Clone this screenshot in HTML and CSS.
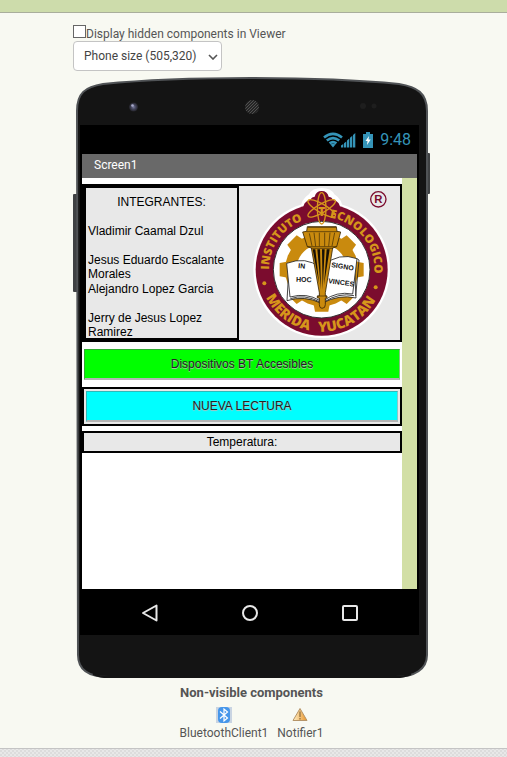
FILE: index.html
```html
<!DOCTYPE html>
<html lang="es">
<head>
<meta charset="utf-8">
<meta name="viewport" content="width=device-width, initial-scale=1">
<title>Viewer</title>
<link rel="stylesheet" href="styles.css">
</head>
<body>
<header class="viewer-header"></header>
<main class="viewer">
  <div class="options">
    <label class="hidden-toggle"><input type="checkbox" class="hidden-check">Display hidden components in Viewer</label>
    <div class="size-picker">
      <select class="size-select" aria-label="Screen size"><option>Phone size (505,320)</option></select>
      <svg class="size-chevron" width="10" height="6" viewBox="0 0 10 6" aria-hidden="true"><path d="M1 1L5 5L9 1" fill="none" stroke="#555" stroke-width="1.6"/></svg>
    </div>
  </div>

  <div class="phone">
    <svg class="phone-shell" viewBox="0 0 357 601" preserveAspectRatio="none" aria-hidden="true">
      <defs>
        <radialGradient id="lens"><stop offset="0" stop-color="#777a9c"/><stop offset=".5" stop-color="#44455c"/><stop offset="1" stop-color="#222228"/></radialGradient>
        <pattern id="mesh" width="3" height="3" patternUnits="userSpaceOnUse"><rect width="3" height="3" fill="#252525"/><path d="M0 3L3 0" stroke="#5c5c5c" stroke-width=".8"/></pattern>
      </defs>
      <rect x="0" y="117" width="5" height="98" rx="1" fill="#3f4143"/>
      <rect x="352" y="76" width="5" height="41" rx="1" fill="#3f4143"/>
      <path d="M4 34C4 16 12 10 30 7C80 2 130 1 178 1S276 2 326 7C344 10 354 16 354 34V578C354 592 342 600 322 600H36C15 600 5 592 5 578Z" fill="#141414" stroke="#505356" stroke-width="2"/>
      <path d="M20 597Q26 600 36 600H322Q332 600 338 597" fill="none" stroke="#141414" stroke-width="2"/>
      <circle cx="60.500" cy="30" r="4.500" fill="url(#lens)"/>
      <circle cx="59.500" cy="28.500" r="1.300" fill="#a9abcc"/>
      <circle cx="179" cy="30" r="7" fill="url(#mesh)"/>
      <circle cx="290" cy="29" r="3" fill="#1e1e1e"/>
      <circle cx="301" cy="29" r="2.500" fill="#1e1e1e"/>
    </svg>

    <div class="display">
      <div class="status-bar">
        <svg width="33" height="16" viewBox="0 0 33 16" aria-label="Network">
          <g fill="none" stroke="#3594b8" stroke-width="2.600"><path d="M1 5.600Q10 -2 19 5.600"/><path d="M3.800 8.600Q10 3.500 16.200 8.600"/><path d="M6.600 11.400Q10 8.800 13.400 11.400"/></g>
          <path d="M7.500 12.600Q10 11 12.500 12.600L10 15.500Z" fill="#3594b8"/>
          <path d="M18 15.500V13.500L20.300 12V15.500ZM21 15.500V11.300L23.300 9.500V15.500ZM24 15.500V8.500L26.300 6.600V15.500ZM27 15.500V5.700L29.300 3.800V15.500ZM30 15.500V3L32.300 1V15.500Z" fill="#3594b8"/>
        </svg>
        <svg width="10" height="16" viewBox="0 0 10 16" aria-label="Battery"><path d="M3 0H7V2H10V16H0V2H3Z" fill="#3594b8"/><path d="M6 4L2.500 9H4.500L4 13L7.700 7.600H5.500Z" fill="#fff"/></svg>
        <span class="clock">9:48</span>
      </div>
      <div class="app">
        <div class="title-bar">Screen1</div>
        <div class="app-body">
          <div class="components">
            <div class="frame team">
              <div class="frame names">
                <p class="names-title">INTEGRANTES:</p>
                <p>Vladimir Caamal Dzul</p>
                <div class="names-pair">
                  <p>Jesus Eduardo Escalante Morales</p>
                  <p>Alejandro Lopez Garcia</p>
                </div>
                <p>Jerry de Jesus Lopez Ramirez</p>
              </div>
              <svg class="seal" viewBox="-3 18 480 462" role="img" aria-label="Instituto Tecnologico Merida Yucatan">
                <defs>
                  <path id="arcTop" d="M87 269A158 158 0 0 1 403 269A158 158 0 0 1 380 350"/>
                  <path id="arcBottom" d="M59 269A186 186 0 0 0 431 269"/>
                </defs>
                <path d="M190 84Q186 64 212 46Q220 30 245 30Q270 30 278 46Q304 64 300 84Z" fill="#fff" stroke="#fff" stroke-width="12"/>
                <circle cx="245" cy="269" r="205" fill="#fff"/>
                <circle cx="245" cy="269" r="198" fill="#7b0c2e"/>
                <path d="M190 88Q188 66 210 60Q216 50 224 50Q228 33 245 33Q262 33 266 50Q274 50 280 60Q302 66 300 88L306 104H184Z" fill="#7b0c2e"/>
                <circle cx="245" cy="269" r="145" fill="#fff" stroke="#333" stroke-width="3"/>
                <g fill="#c98a0e">
                  <path id="tooth" d="M219 176L225 143H265L271 176Z"/>
                  <use href="#tooth" transform="rotate(45 245 269)"/>
                  <use href="#tooth" transform="rotate(90 245 269)"/>
                  <use href="#tooth" transform="rotate(135 245 269)"/>
                  <use href="#tooth" transform="rotate(180 245 269)"/>
                  <use href="#tooth" transform="rotate(225 245 269)"/>
                  <use href="#tooth" transform="rotate(270 245 269)"/>
                  <use href="#tooth" transform="rotate(315 245 269)"/>
                  <circle cx="245" cy="269" r="110"/>
                </g>
                <circle cx="245" cy="269" r="76" fill="#fff"/>
                <g fill="#fff" stroke="#222" stroke-width="2.500">
                  <path d="M147 258L141 362Q193 345 244 370L240 268Q206 238 147 258Z"/>
                  <path d="M343 250L348 354Q297 342 246 370L250 265Q290 231 343 250Z"/>
                  <path d="M140 250L150 351Q200 337 240 362V262Q197 228 140 250Z"/>
                  <path d="M351 236L338 342Q289 333 251 362V256Q297 216 351 236Z"/>
                  <path d="M151 356Q193 341 240 366M342 347Q297 337 252 366" fill="none"/>
                  <path d="M351 236L357 240L347 348" fill="none"/>
                </g>
                <g class="seal-motto">
                  <text x="174" y="264" transform="rotate(5 174 264)">IN</text>
                  <text x="168" y="305" transform="rotate(2 168 305)">HOC</text>
                  <text x="273" y="261" transform="rotate(9 273 261)">SIGNO</text>
                  <text x="264" y="309" transform="rotate(8 264 309)">VINCES</text>
                </g>
                <path d="M202 140H289L291 154L302 156L290 200L278 204L256 338V348H261V354H256V374Q256 385 246 385Q238 385 238 374V354H232V348H238V338L214 204L202 200L188 156L200 154Z" fill="#c98a0e" stroke="#3a2706" stroke-width="2.500"/>
                <path d="M203 142H288M200 155H292M202 200H290M213 205H279M232 348H261M208 160L216 198M222 158L227 199M238 158V199M254 158V199M270 158L266 199M284 158L276 198" fill="none" stroke="#3a2706" stroke-width="2"/>
                <path d="M218 208H226L238 315ZM232 208H240L243 330ZM246 208H254L248 330ZM260 208H269L252 315Z" fill="#171006"/>
                <g class="seal-name">
                  <text><textPath href="#arcTop" startOffset="0">INSTITUTO</textPath></text>
                  <text x="245" y="108" text-anchor="middle">T</text>
                  <text><textPath href="#arcTop" startOffset="272">ECNOLOGICO</textPath></text>
                  <text class="seal-city"><textPath href="#arcBottom" startOffset="86">MERIDA</textPath></text>
                  <text class="seal-city"><textPath href="#arcBottom" startOffset="281">YUCATAN</textPath></text>
                </g>
                <g fill="none" stroke="#d6961b" stroke-width="4">
                  <ellipse cx="245" cy="85" rx="13" ry="47"/>
                  <ellipse cx="245" cy="85" rx="13" ry="47" transform="rotate(60 245 85)"/>
                  <ellipse cx="245" cy="85" rx="13" ry="47" transform="rotate(-60 245 85)"/>
                </g>
                <circle cx="73" cy="310" r="6" fill="#d6961b"/>
                <circle cx="407" cy="322" r="6" fill="#d6961b"/>
                <circle cx="415" cy="58" r="23" fill="none" stroke="#7b0c2e" stroke-width="4"/>
                <text class="seal-mark" x="415" y="70" text-anchor="middle">R</text>
              </svg>
            </div>
            <button type="button" class="action action-green">Dispositivos BT Accesibles</button>
            <div class="frame reading"><button type="button" class="action action-cyan">NUEVA LECTURA</button></div>
            <div class="frame temperature">Temperatura:</div>
          </div>
        </div>
      </div>
      <div class="nav-bar">
        <svg width="18" height="18" viewBox="0 0 18 18" aria-label="Back"><path d="M2 9L15.500 1.500V16.500Z" fill="none" stroke="#e8e8e8" stroke-width="2" stroke-linejoin="round"/></svg>
        <svg width="18" height="18" viewBox="0 0 18 18" aria-label="Home"><circle cx="9" cy="9" r="7" fill="none" stroke="#e8e8e8" stroke-width="2"/></svg>
        <svg width="18" height="18" viewBox="0 0 18 18" aria-label="Recent"><rect x="2" y="2" width="14" height="14" rx="1" fill="none" stroke="#e8e8e8" stroke-width="2"/></svg>
      </div>
    </div>
  </div>

  <section class="non-visible">
    <h2 class="non-visible-title">Non-visible components</h2>
    <div class="non-visible-list">
      <figure class="component">
        <svg width="16" height="16" viewBox="0 0 16 16" aria-hidden="true"><rect width="16" height="16" fill="#c9d4e2"/><rect x="2" width="12" height="16" rx="4" fill="#4696ea"/><path d="M4 4.500L11.500 11L8 14V2L11.500 5L4 11.500" fill="none" stroke="#fff" stroke-width="1.200"/></svg>
        <figcaption>BluetoothClient1</figcaption>
      </figure>
      <figure class="component">
        <svg width="16" height="16" viewBox="0 0 16 16" aria-hidden="true"><defs><linearGradient id="warn"><stop offset="0" stop-color="#fff0c8"/><stop offset="1" stop-color="#e8942a"/></linearGradient></defs><path d="M8 1.500L15 13.500H1Z" fill="url(#warn)" stroke="#b59468" stroke-linejoin="round"/><path d="M8 4.500V10M8 11V12.500" stroke="#8a6c3c" stroke-width="1.200"/></svg>
        <figcaption>Notifier1</figcaption>
      </figure>
    </div>
  </section>
</main>
</body>
</html>
```
FILE: styles.css
```css
* { box-sizing: border-box; }

body {
  margin: 0;
  min-height: 100vh;
  background: repeating-conic-gradient(#dcdcdc 0 25%, #e8e8e8 0 50%) 0 0 / 4px 4px;
  font: 12px/16px Roboto, sans-serif;
  color: #555;
}

p, h2, figure { margin: 0; }
svg { display: block; flex: none; }

.viewer-header {
  height: 13px;
  background: #cddcab;
  border-bottom: 1px solid #a9ae9c;
}

.viewer {
  padding: 12px 77px 7px 73px;
  background: #f8f9f2;
  border-bottom: 1px solid #c4c4c4;
}

.hidden-toggle {
  display: flex;
  height: 16px;
  line-height: 18px;
}

.hidden-check {
  appearance: none;
  width: 13px;
  height: 13px;
  margin: 0;
  border: 1px solid #666;
  background: #fff;
}

.size-picker {
  position: relative;
  width: 149px;
}

.size-select {
  appearance: none;
  display: block;
  width: 100%;
  height: 30px;
  padding: 0 10px;
  border: 1px solid #c4c4c4;
  border-radius: 4px;
  background: #fff;
  color: #444;
  font: inherit;
}

.size-chevron {
  position: absolute;
  right: 4px;
  top: 13px;
  pointer-events: none;
}

.phone {
  position: relative;
  max-width: 357px;
  margin-top: 6px;
  padding: 48px 11px 43px 7px;
}

.phone-shell {
  position: absolute;
  inset: 0;
  width: 100%;
  height: 100%;
}

.display {
  position: relative;
  background: #000;
}

.status-bar {
  display: flex;
  align-items: center;
  justify-content: flex-end;
  gap: 7px;
  height: 29px;
  padding-right: 8px;
}

.clock {
  font-size: 16px;
  color: #3594b8;
}

.app { padding: 0 2px; }

.title-bar {
  height: 24px;
  padding-left: 12px;
  background: #696969;
  color: #fff;
  line-height: 22px;
}

.app-body {
  min-height: 411px;
  padding-right: 15px;
  background: #d2dfa5;
  font-family: "Liberation Sans", Arial, sans-serif;
  line-height: 14px;
  color: #000;
}

.components {
  min-height: 411px;
  padding-top: 6px;
  background: #fff;
}

.frame {
  border: 2px solid #000;
  background: #e8e8e8;
}

.team {
  display: flex;
  height: 158px;
}

.names {
  flex: 1;
  display: flex;
  flex-direction: column;
  gap: 15px;
  max-width: 155px;
  padding: 7px 2px 0;
}

.names-title { text-align: center; }

.names-pair {
  display: grid;
  gap: 1px;
}

.seal {
  width: 160px;
  height: 154px;
}

.seal-name {
  font: 800 35px "Open Sans", sans-serif;
  fill: #d6961b;
}

.seal-city { font-size: 42px; }

.seal-motto {
  font: bold 21px "Liberation Sans", sans-serif;
  fill: #111;
}

.seal-mark {
  font: bold 34px "Liberation Sans", sans-serif;
  fill: #7b0c2e;
}

.action {
  display: block;
  width: 100%;
  height: 31px;
  padding: 0;
  border: 1px solid #b4b4b4;
  border-bottom-width: 2px;
  color: #222;
  font: inherit;
  text-shadow: 0 1px 1px #bbb;
}

.action-green {
  width: auto;
  min-width: calc(100% - 4px);
  margin: 7px 2px;
  border-color: #2fae2f #7fc47f #b4b4b4 #2fae2f;
  background: #0f0;
}

.action-cyan {
  border-color: #2fb9b9 #8cc8c8 #b4b4b4 #2fb9b9;
  background: #0ff;
}

.reading { padding: 2px; }

.temperature {
  height: 22px;
  margin-top: 5px;
  line-height: 18px;
  text-align: center;
}

.nav-bar {
  display: flex;
  justify-content: center;
  align-items: center;
  gap: 82px;
  height: 46px;
  padding-top: 2px;
}

.non-visible {
  display: flex;
  flex-direction: column;
  align-items: center;
  max-width: 357px;
  padding-top: 7px;
}

.non-visible-title {
  font-size: 13px;
  line-height: 16px;
}

.non-visible-list {
  display: flex;
  gap: 9px;
  padding-top: 6px;
}

.component {
  display: flex;
  flex-direction: column;
  align-items: center;
  gap: 2px;
}
```
